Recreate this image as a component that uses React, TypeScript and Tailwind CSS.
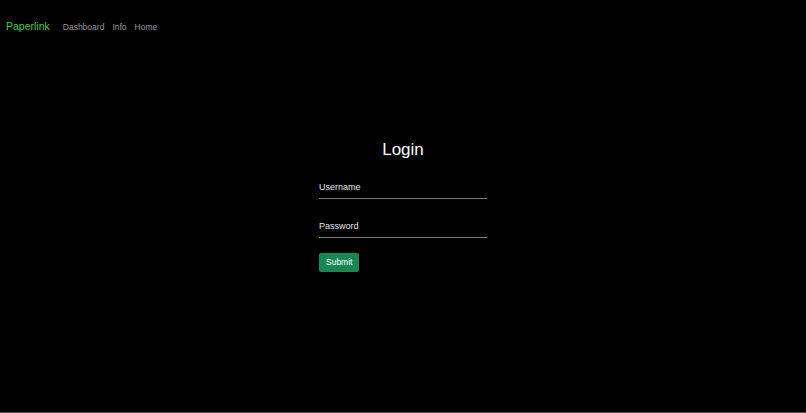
const NavLink = ({ label }: { label: string }) => (
  <a href="#" className="text-[8.5px] text-[#9a9a9a] hover:text-white">
    {label}
  </a>
);

const Field = ({ label, type }: { label: string; type: string }) => (
  <div className="flex flex-col">
    <label className="text-[9px] leading-[13px] text-[#e6e6e6]">{label}</label>
    <input
      type={type}
      className="h-[5px] w-full border-b-[1.5px] border-[#7a7a7a] bg-transparent text-[9px] text-white outline-none"
    />
  </div>
);

export default function App() {
  return (
    <div
      className="box-border flex h-[413px] w-full flex-col border-b border-[#44504e] bg-black"
      style={{ fontFamily: '"Liberation Sans", Arial, sans-serif' }}
    >
      <nav className="flex h-[54px] items-center px-[6px]">
        <a href="#" className="mr-[13px] text-[10.5px] text-[#41c74c]">
          Paperlink
        </a>
        <div className="flex items-center gap-[8px]">
          <NavLink label="Dashboard" />
          <NavLink label="Info" />
          <NavLink label="Home" />
        </div>
      </nav>

      <main className="flex flex-col items-center pt-[86px]">
        <h2 className="text-[17px] leading-[20px] text-white">Login</h2>
        <form className="mt-[21px] flex w-[168px] flex-col gap-[21px]">
          <Field label="Username" type="text" />
          <Field label="Password" type="password" />
          <div className="-mt-[11px]">
            <button
              type="button"
              className="h-[19px] rounded-[2px] bg-[#198754] px-[7px] text-[8.5px] text-white"
            >
              Submit
            </button>
          </div>
        </form>
      </main>
    </div>
  );
}
